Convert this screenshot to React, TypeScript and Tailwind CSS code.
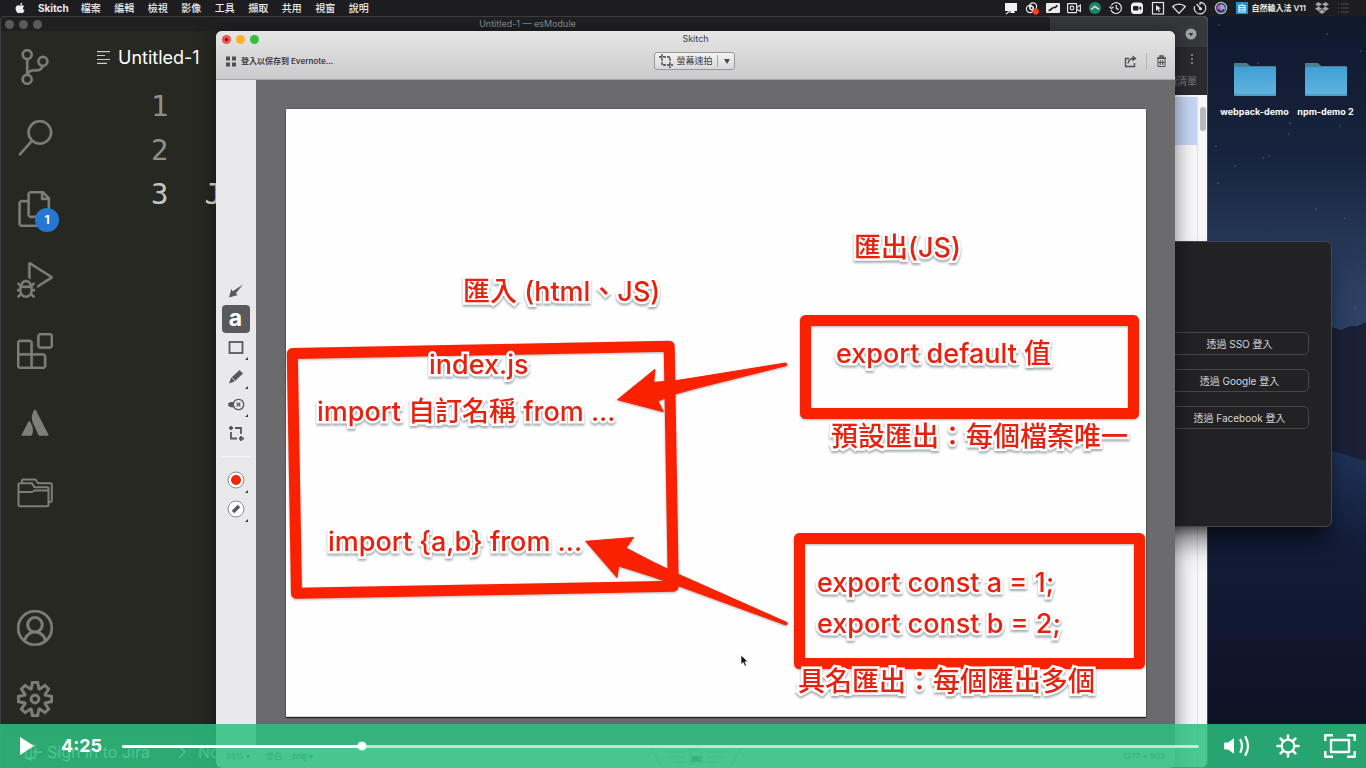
import React from "react";
import type { ReactNode } from "react";
import { FaApple, FaDropbox } from "react-icons/fa";
import {
  VscAccount,
  VscDebugAlt,
  VscExtensions,
  VscFiles,
  VscSearch,
  VscSettingsGear,
  VscSourceControl,
} from "react-icons/vsc";

const menus = ["檔案", "編輯", "檢視", "影像", "工具", "擷取", "共用", "視窗", "說明"];

function StatusIcon({ children }: { children: ReactNode }) {
  return (
    <svg viewBox="0 0 14 14" className="h-3.5 w-3.5 shrink-0" fill="none" stroke="#e4e4e6" strokeWidth="1.2" aria-hidden="true">
      {children}
    </svg>
  );
}

function MenuBar() {
  return (
    <header className="relative z-10 flex h-4 shrink-0 items-center bg-[#1d1d1f] pl-3.5 pr-4 text-[10px] leading-4 text-[#ececee]">
      <nav className="flex items-center gap-3 font-medium">
        <FaApple className="h-3 w-3" />
        <button className="text-[10px] font-bold">Skitch</button>
        <div className="flex w-[288px] justify-between">
          {menus.map((m) => (
            <button key={m}>{m}</button>
          ))}
        </div>
      </nav>
      <div className="ml-auto flex items-center gap-[7px]">
        <StatusIcon>
          <path d="M1 2h12v8h-3l1 2H6l1-2H1z" fill="#f2f2f2" stroke="none" />
          <path d="M2 13l5-4" />
        </StatusIcon>
        <StatusIcon>
          <circle cx="5" cy="8" r="3.6" />
          <circle cx="8" cy="5.5" r="3.6" />
          <circle cx="6.5" cy="7" r="1.6" />
          <circle cx="10.8" cy="10.6" r="3.1" fill="#ff3b1d" stroke="none" />
        </StatusIcon>
        <StatusIcon>
          <rect x="0" y="2" width="14" height="10" rx="1" fill="#ececec" stroke="none" />
          <path d="M2.5 9.5c3 0 3-3 5.5-3s1.5-1 3.5-2" stroke="#222" strokeWidth="1.7" />
        </StatusIcon>
        <StatusIcon>
          <rect x=".6" y="2.6" width="9" height="9" rx=".5" />
          <circle cx="5" cy="7" r="1.8" />
          <path d="M9.6 6.5l3.8-2.5v6.5l-3.8-2.5" />
        </StatusIcon>
        <StatusIcon>
          <circle cx="7" cy="7" r="6" fill="#20856c" stroke="none" />
          <path d="M3 8.5l4-3 4 3" strokeWidth="1.5" />
        </StatusIcon>
        <StatusIcon>
          <path d="M2.3 4.5A5.4 5.4 0 1 1 2 9M.5 5.5l1.8 2L4.500 6M7.300 4v3.400l2.400 1.200" />
        </StatusIcon>
        <StatusIcon>
          <rect x="1" y="1.5" width="12" height="11.5" rx="3.5" fill="#f2f2f2" stroke="none" />
          <rect x="3" y="5" width="5.5" height="4.5" rx="1" fill="#222" stroke="none" />
          <path d="M9 7l2-1.5v3.500z" fill="#222" stroke="#222" strokeWidth=".5" />
        </StatusIcon>
        <StatusIcon>
          <rect x="1.5" y="1.5" width="11" height="11.5" />
          <path d="M5 4l5 3.6-2.200.4 1.200 2.500-1.200.5-1.200-2.400L5 10z" fill="#e4e4e6" stroke="none" />
        </StatusIcon>
        <StatusIcon>
          <path d="M.7 5.500C4 2.200 10 2.200 13.300 5.500L7 12.300z" />
        </StatusIcon>
        <StatusIcon>
          <path d="M7 1.300a5.800 5.800 0 1 1-5.500 4M7 1.300V4M3.500 3l4 4.500" />
          <circle cx="7.5" cy="7.7" r=".9" fill="#e4e4e6" />
        </StatusIcon>
        <StatusIcon>
          <circle cx="7" cy="7" r="5.6" fill="#273b78" stroke="#b9bccb" />
          <path d="M3 9c0-4 2-5.500 4-5.500S11 5 11 9L9 7.500 7 10 5 7.500z" fill="#e65a95" stroke="none" />
          <path d="M7 3.500C9 3.500 11 5 11 9L9 7.500 7 10z" fill="#5cc8e8" stroke="none" />
        </StatusIcon>
        <div className="flex items-center gap-0.5">
          <StatusIcon>
            <rect x="1" y="1" width="12" height="12" fill="#1f93c8" stroke="none" />
            <path d="M4 4.500h6v6.500H4zM4 6.700h6M4 8.800h6M7 2.500v2" stroke="#dff2fb" />
          </StatusIcon>
          <span className="text-[8px] font-semibold">自然輸入法 V11</span>
        </div>
        <FaDropbox className="ml-0.5 h-3.5 w-3.5 text-[#a2a2a5]" />
        <StatusIcon>
          <path d="M2 3h1M5 3h8M2 7h1M5 7h8M2 11h1M5 11h8" stroke="#4d4d50" />
        </StatusIcon>
      </div>
    </header>
  );
}

function Wallpaper() {
  return (
    <svg className="absolute inset-0 h-full w-full" viewBox="0 16 1366 752" preserveAspectRatio="none" aria-hidden="true">
      <defs>
        <linearGradient id="sky" x1="0" y1="0" x2="0" y2="1">
          <stop offset="0" stopColor="#0f182d" />
          <stop offset=".18" stopColor="#17233d" />
          <stop offset=".36" stopColor="#2b3f62" />
          <stop offset=".5" stopColor="#31476b" />
        </linearGradient>
        <linearGradient id="dune" x1="0" y1="0" x2="0" y2="1">
          <stop offset="0" stopColor="#1e3358" />
          <stop offset=".3" stopColor="#131c38" />
          <stop offset="1" stopColor="#0c1020" />
        </linearGradient>
      </defs>
      <rect y="16" width="1366" height="752" fill="url(#sky)" />
      <path d="M1190 327h142l9 3 9-4 8 0 8-4v300h-176z" fill="#1b2036" />
      <path d="M1332 451l34 10v307h-166V461z" fill="url(#dune)" />
      <g fill="#8493b1">
        {[
          [1219, 25], [1327, 34], [1361, 51], [1258, 63], [1290, 123], [1340, 126], [1216, 146], [1235, 166],
          [1263, 158], [1289, 134], [1218, 183], [1345, 218], [1316, 209], [1355, 308], [1269, 156],
        ].map(([x, y]) => (
          <circle key={`${x}-${y}`} cx={x} cy={y} r=".6" />
        ))}
      </g>
    </svg>
  );
}

function Folder({ name }: { name: string }) {
  return (
    <figure className="flex w-[71px] flex-col items-center">
      <svg viewBox="0 0 44 34" className="h-[34px] w-11" aria-hidden="true">
        <defs>
          <linearGradient id="folder" x1="0" y1="0" x2="0" y2="1">
            <stop offset="0" stopColor="#3f9fd4" />
            <stop offset="1" stopColor="#62b5df" />
          </linearGradient>
        </defs>
        <path d="M1 2q0-1 1-1h11q1 0 2 1l2 2h25q1 0 1 1v5H1z" fill="#4a7f99" />
        <rect x="1" y="5" width="42" height="29" rx="1" fill="url(#folder)" />
        <path d="M1 33h42" stroke="#3c87b2" />
      </svg>
      <figcaption className="mt-2.5 whitespace-nowrap text-[9px] font-bold leading-3 text-white">{name}</figcaption>
    </figure>
  );
}

function BrowserWindow() {
  return (
    <section className="absolute bottom-0 left-0 right-[158px] top-0 flex flex-col overflow-hidden rounded-b-md rounded-t border border-[#48494c] bg-[#f7f6f9]">
      <div className="flex h-[30px] shrink-0 items-center justify-end bg-[#37383c] pr-2.5 pt-1">
        <svg viewBox="0 0 12 12" className="h-3 w-3" aria-hidden="true">
          <circle cx="6" cy="6" r="5.5" fill="#a2a3a6" />
          <path d="M3.500 5h5L6 8.200z" fill="#35363a" />
        </svg>
      </div>
      <div className="flex h-12 shrink-0 flex-col items-end justify-between bg-[#2b2b2f] pb-1.5 pr-2.5 pt-1.5 text-[10px] leading-4 text-[#77777b]">
        <svg viewBox="0 0 10 12" className="h-3 w-2.5" fill="#9a9a9d" aria-hidden="true">
          <circle cx="5" cy="2" r="1" />
          <circle cx="5" cy="6" r="1" />
          <circle cx="5" cy="10" r="1" />
        </svg>
        <span>閱讀清單</span>
      </div>
      <div className="flex min-h-0 flex-1 pt-0.5">
        <div className="flex-1">
          <div className="h-12 bg-[#c6d6f4]" />
        </div>
        <div className="flex w-2.5 flex-col items-center border-l border-[#e2e1e5] pt-2.5">
          <div className="h-6 w-1.5 rounded-full bg-[#b9b9bb]" />
        </div>
      </div>
    </section>
  );
}

const iconClass = "h-9 w-9 [stroke-width:0.25]";

const sideIcons = [
  { label: "Source Control", icon: <VscSourceControl className={iconClass} /> },
  { label: "Search", icon: <VscSearch className={iconClass} /> },
  { label: "Explorer", icon: <VscFiles className={iconClass} />, badge: "1" },
  { label: "Run", icon: <VscDebugAlt className={iconClass} /> },
  { label: "Extensions", icon: <VscExtensions className={iconClass} /> },
  {
    label: "Atlassian",
    icon: (
      <svg viewBox="0 0 36 36" className="h-9 w-9" fill="currentColor" aria-hidden="true">
        <path d="M11.500 17.500q.8-1.200 1.600.2c3 5 3.700 9 1.900 13.200q-.4.800-1.300.8H5.500q-1.400 0-.8-1.300z" />
        <path d="M17.300 6q.8-1.200 1.600.2L31.400 30.400q.6 1.300-.8 1.300h-7.800q-1 0-1.400-.8l-5.400-12c-2-4.700-1.400-8.700 1.300-12.900z" />
      </svg>
    ),
  },
  {
    label: "Projects",
    icon: (
      <svg viewBox="0 0 36 36" className="h-9 w-9" fill="none" stroke="currentColor" strokeWidth="2" strokeLinejoin="round" aria-hidden="true">
        <path d="M1.500 9.500q0-1.200 1.200-1.200H15l2.500 4h13q1 0 1 1V30q0 1.200-1.200 1.200H2.700q-1.200 0-1.200-1.200zM1.500 17h13.500l2.500-1.500h14" />
        <path d="M5 8V5.500q0-1 1-1h12.500l2.500 3.700h12.500q1.300 0 1.300 1.200v16.200q0 1.400-1.300 1.400H32" />
      </svg>
    ),
  },
];

function EditorWindow() {
  return (
    <section className="absolute bottom-0 left-0 right-[315px] top-0 flex flex-col overflow-hidden rounded border border-[#3c3c3e] bg-[#282822]">
      <div className="grid h-3.5 shrink-0 grid-cols-[1fr_auto_1fr] items-center bg-[#202022] pl-1 text-[9px] text-[#8c8c8f]">
        <div className="flex gap-[5px]">
          <i className="h-[9px] w-[9px] rounded-full bg-[#5a5a5d]" />
          <i className="h-[9px] w-[9px] rounded-full bg-[#5a5a5d]" />
          <i className="h-[9px] w-[9px] rounded-full bg-[#5a5a5d]" />
        </div>
        <span>Untitled-1 — esModule</span>
      </div>
      <div className="flex min-h-0 flex-1">
        <nav className="flex w-[68px] shrink-0 flex-col text-[#7e7e79]">
          {sideIcons.map((s) => (
            <button key={s.label} aria-label={s.label} className="relative flex h-[71px] shrink-0 items-center justify-center">
              {s.icon}
              {s.badge && (
                <span className="absolute bottom-3 right-2.5 flex h-6 w-6 items-center justify-center rounded-full bg-[#2776d2] text-xs font-bold text-white">
                  {s.badge}
                </span>
              )}
            </button>
          ))}
          <button aria-label="Account" className="mt-auto flex h-[71px] shrink-0 items-center justify-center">
            <VscAccount className={iconClass} />
          </button>
          <button aria-label="Manage" className="flex h-[71px] shrink-0 items-center justify-center">
            <VscSettingsGear className={iconClass} />
          </button>
        </nav>
        <div className="flex min-w-0 flex-1 flex-col">
          <div className="flex h-[53px] shrink-0 items-center gap-2 pl-7 text-lg text-white">
            <svg viewBox="0 0 13 13" className="h-[13px] w-[13px]" stroke="#c8c8c6" strokeWidth="1.2" aria-hidden="true">
              <path d="M0 .6h13M0 4.500h8M0 8.500h13M0 12.400h10" />
            </svg>
            <span>Untitled-1</span>
          </div>
          <ol className="font-['DejaVu_Sans_Mono',monospace] text-[29px] leading-[44px] text-[#8e8f89]">
            <li className="flex gap-9 pl-[82px]">1</li>
            <li className="flex gap-9 pl-[82px]">2</li>
            <li className="flex gap-9 pl-[82px] text-[#c5c6c0]">
              <span>3</span>
              <span className="text-[#e3e3dd]">J</span>
            </li>
          </ol>
        </div>
      </div>
      <footer className="flex h-[33px] shrink-0 items-center bg-[#2e2e2b] pl-6 pt-0.5 text-base text-[#f0f0ee]">
        <svg viewBox="0 0 18 18" className="mr-1 h-[18px] w-[18px]" fill="none" stroke="currentColor" strokeWidth="1.3" aria-hidden="true">
          <path d="M1 2h9v4M10 12v3H1V2l5 3v12l-5-2M17 9H9M12 6L9 9l3 3" />
        </svg>
        <span>Sign in to Jira</span>
        <svg viewBox="0 0 8 14" className="ml-7 mr-3 h-3.5 w-2" fill="none" stroke="currentColor" strokeWidth="1.3" aria-hidden="true">
          <path d="M1 1l6 6-6 6" />
        </svg>
        <span>No</span>
      </footer>
    </section>
  );
}

function LoginWindow() {
  return (
    <section className="absolute right-[34px] top-[225px] flex h-[286px] w-[185px] flex-col items-center gap-3.5 rounded-md border border-[#47484c] bg-[#222224] pt-[90px] text-[10px] text-[#d6d6d8] shadow-xl shadow-black/50">
      {["SSO", "Google", "Facebook"].map((p) => (
        <button key={p} className="h-[23px] w-[138px] shrink-0 rounded-[5px] border border-[#47474a] pt-px">
          透過 {p} 登入
        </button>
      ))}
    </section>
  );
}

function ToolMark() {
  return <path d="M26 24v3h-3z" fill="#3d3d3f" stroke="none" />;
}

function Tool({ label, active, children }: { label: string; active?: boolean; children: ReactNode }) {
  return (
    <button
      aria-label={label}
      className={
        active
          ? "flex min-h-0 w-7 flex-1 items-center justify-center rounded bg-[#59595c]"
          : "flex min-h-0 w-7 flex-1 items-center justify-center"
      }
    >
      {children}
    </button>
  );
}

function ToolSvg({ children }: { children: ReactNode }) {
  return (
    <svg viewBox="0 0 28 28" className="h-7 w-7" fill="none" stroke="#59595c" strokeWidth="1.5" aria-hidden="true">
      {children}
    </svg>
  );
}

function ToolPalette() {
  return (
    <aside className="flex w-10 shrink-0 flex-col items-center bg-[#e9e8eb] pr-px pt-[196px]">
      <div className="flex h-[171px] flex-col">
        <Tool label="Arrow">
          <ToolSvg>
            <path d="M7 21.500l2.300-8.500 1.500 2.300L21 8.500l-7.300 9 2.300 1.500z" fill="#59595c" stroke="none" />
          </ToolSvg>
        </Tool>
        <Tool label="Text" active>
          <span className="text-[23px] font-bold leading-none text-white">a</span>
        </Tool>
        <Tool label="Rectangle">
          <ToolSvg>
            <rect x="7.500" y="9" width="13" height="11" strokeWidth="1.8" />
            <ToolMark />
          </ToolSvg>
        </Tool>
        <Tool label="Marker">
          <ToolSvg>
            <path d="M7 21.500l2-5.500 8.500-8 3.500 3.500-8.500 8z" fill="#59595c" stroke="none" />
            <path d="M9.500 15.500l4 4" stroke="#e9e8eb" strokeWidth=".8" />
            <ToolMark />
          </ToolSvg>
        </Tool>
        <Tool label="Pixelate">
          <ToolSvg>
            <path d="M6 14.500c0-2 2-2.500 5.500-2.500v5.500c-3.500 0-5.500-1-5.500-3z" fill="#59595c" stroke="none" />
            <circle cx="16.5" cy="14.5" r="5.2" strokeWidth="1.3" fill="#e9e8eb" />
            <path d="M14.700 12.700l3.600 3.600M18.300 12.700l-3.600 3.600" strokeWidth="1.3" />
            <ToolMark />
          </ToolSvg>
        </Tool>
        <Tool label="Crop">
          <ToolSvg>
            <path d="M9 13v6.500h6M13 9h6v6M9 7v4M7 9h4M19 17v5M17 19.500h5" strokeWidth="1.8" />
            <circle cx="9" cy="9" r="1" fill="#59595c" />
            <circle cx="19" cy="19.5" r="1" fill="#59595c" />
          </ToolSvg>
        </Tool>
      </div>
      <hr className="my-[9px] w-7 border-[#f8f8fa]" />
      <div className="flex h-[57px] flex-col">
        <Tool label="Color">
          <ToolSvg>
            <circle cx="14" cy="14" r="8" fill="#fff" stroke="#8b8c90" strokeWidth="1" />
            <circle cx="14" cy="14" r="5" fill="#fb2200" stroke="none" />
            <ToolMark />
          </ToolSvg>
        </Tool>
        <Tool label="Size">
          <ToolSvg>
            <circle cx="14" cy="14" r="8" fill="#fff" stroke="#8b8c90" strokeWidth="1" />
            <path d="M11 17l6-6" strokeWidth="3.5" />
            <ToolMark />
          </ToolSvg>
        </Tool>
      </div>
    </aside>
  );
}

function Note({ place, children }: { place: string; children: ReactNode }) {
  return (
    <p
      className={`absolute whitespace-nowrap text-[27px] font-medium leading-8 text-[#e8210e] [-webkit-text-stroke:5px_#fff] [paint-order:stroke_fill] [filter:drop-shadow(0_2px_1px_rgba(70,90,100,0.5))] ${place}`}
    >
      {children}
    </p>
  );
}

function Paper() {
  return (
    <div className="relative flex-1 overflow-hidden border-b border-[#d5d5d7] bg-[#fefefe] shadow-[0_1px_1px_#222,0_0_2px_#444]">
      <svg
        viewBox="286 109 860 608"
        className="absolute left-0 top-0 h-[608px] w-[860px] [filter:drop-shadow(0_1px_1px_rgba(60,60,70,0.4))]"
        fill="none"
        stroke="#f92100"
        strokeWidth="11"
        strokeLinejoin="round"
        aria-hidden="true"
      >
        <path d="M292.300 353.500L669.200 346.200 673.300 586.300 296.500 593.300z" />
        <rect x="805.5" y="320.5" width="328" height="93" />
        <rect x="799.5" y="538.5" width="340" height="125" />
        <g fill="#f92100" stroke="#f92100" strokeWidth="1">
          <path d="M617.500 399.700L655 369.300 653.700 382.300Q672 382 690 378.500L785.500 363Q788 364 786.500 365.500L695 388.500Q675 393 658 401L663.300 411.700z" />
          <path d="M585.700 541.300L633.500 537.500 626 548Q652 562 680 575L787 622.500Q788 624.500 786 625L679 586Q652 576 618.700 566L617 577.500z" />
        </g>
      </svg>
      <Note place="left-[177px] top-[167px]">匯入 (html、JS)</Note>
      <Note place="left-[568px] top-[123px]">匯出(JS)</Note>
      <Note place="left-[143px] top-[240px]">index.js</Note>
      <Note place="left-[31px] top-[287px]">import 自訂名稱 from ...</Note>
      <Note place="left-[42px] top-[417px]">{"import {a,b} from ..."}</Note>
      <Note place="left-[550px] top-[229px]">export default 值</Note>
      <Note place="left-[545px] top-[312px]">預設匯出：每個檔案唯一</Note>
      <Note place="left-[531px] top-[458px]">export const a = 1;</Note>
      <Note place="left-[531px] top-[499px]">export const b = 2;</Note>
      <Note place="left-[512px] top-[557px]">具名匯出：每個匯出多個</Note>
      <svg viewBox="0 0 10 14" className="absolute left-[454px] top-[545px] h-3.5 w-2.5" aria-hidden="true">
        <path d="M1 1v9.500l2.200-2 1.600 3.700 1.700-.7-1.600-3.700h3z" fill="#111" stroke="#fff" strokeWidth=".7" />
      </svg>
    </div>
  );
}

function SkitchWindow() {
  return (
    <section className="absolute bottom-0 left-[216px] right-[191px] top-[15px] flex flex-col overflow-hidden rounded-md bg-[#e6e6e8] shadow-[0_4px_20px_rgba(0,0,0,0.5)]">
      <div className="flex h-[49px] shrink-0 flex-col border-b border-[#a8a8aa] bg-linear-to-b from-[#e6e6e7] to-[#cbcbcd] text-[#3d3d40]">
        <div className="grid h-4 grid-cols-[1fr_auto_1fr] items-center px-1.5 text-[9px]">
          <div className="flex gap-[5px]">
            <button aria-label="Close" className="flex h-[9px] w-[9px] items-center justify-center rounded-full bg-[#ee5350]">
              <i className="h-[3px] w-[3px] rounded-full bg-[#6b0d0b]" />
            </button>
            <button aria-label="Minimize" className="h-[9px] w-[9px] rounded-full bg-[#fab22b]" />
            <button aria-label="Zoom" className="h-[9px] w-[9px] rounded-full bg-[#31c13c]" />
          </div>
          <span>Skitch</span>
        </div>
        <div className="grid h-7 grid-cols-[1fr_auto_1fr] items-center pl-[9px] pr-2 text-[8px] font-semibold">
          <button className="flex items-center gap-1">
            <svg viewBox="0 0 12 11" className="h-[11px] w-3" fill="#4f4f52" aria-hidden="true">
              <path d="M1 .5h4v4H1zM7 .5h4v4H7zM1 6.500h4v4H1zM7 6.500h4v4H7z" />
            </svg>
            登入以保存到 Evernote...
          </button>
          <button className="mr-1 flex h-[18px] w-[81px] items-center rounded-[3px] border border-[#98989a] bg-linear-to-b from-[#f3f3f4] to-[#d9d9db] pl-1 font-normal">
            <svg viewBox="0 0 14 14" className="mr-1 h-3.5 w-3.5" fill="none" stroke="#3e3e41" strokeWidth="1.3" aria-hidden="true">
              <path d="M3 0v11h11M0 3h11v11" strokeDasharray="3 1" />
            </svg>
            <span className="text-[9px]">螢幕速拍</span>
            <span className="ml-1 h-3 w-px bg-[#a9a9ab]" />
            <svg viewBox="0 0 6 5" className="ml-1.5 h-[5px] w-1.5" fill="#4a4a4d" aria-hidden="true">
              <path d="M0 0h6L3 5z" />
            </svg>
          </button>
          <div className="flex items-center justify-end gap-[9px]">
            <button aria-label="Share">
              <svg viewBox="0 0 13 13" className="h-[13px] w-[13px]" fill="none" stroke="#4f4f52" strokeWidth="1.4" aria-hidden="true">
                <path d="M5 3.500H1.500v8h9V8M4 8.500c.5-3 2.500-5 5.500-5" />
                <path d="M8.500 .5l4 3-4 3z" fill="#4f4f52" stroke="none" />
              </svg>
            </button>
            <span className="h-4 w-px bg-[#b5b5b7]" />
            <button aria-label="Delete">
              <svg viewBox="0 0 11 13" className="h-[13px] w-[11px]" fill="none" stroke="#4f4f52" aria-hidden="true">
                <path d="M1 3h9M4 3V1h3v2" strokeWidth="1.4" />
                <path d="M2 3.500h7v8H2zM4.300 5v5M6.700 5v5M2 7.500h7" />
              </svg>
            </button>
          </div>
        </div>
      </div>
      <div className="flex min-h-0 flex-1">
        <ToolPalette />
        <main className="flex min-w-0 flex-1 bg-[#6b6b6d] pb-[30px] pl-[30px] pr-[29px] pt-[29px]">
          <Paper />
        </main>
      </div>
      <footer className="grid h-[21px] shrink-0 grid-cols-[1fr_auto_1fr] items-center px-2.5 pb-[3px] text-[8px] text-[#5a5a5c]">
        <div className="flex gap-4">
          <span>95% ▾</span>
          <span className="flex gap-2">
            <span>空白</span>
            <span>.png ▾</span>
          </span>
        </div>
        <svg viewBox="0 0 94 18" className="h-[18px] w-[94px]" fill="none" stroke="#a6a6a8" aria-hidden="true">
          <path d="M0 0q4 2 6 8t6 10M94 0q-4 2-6 8t-6 10M18 5h18M22 10h14M26 15h10M58 5h18M58 10h14M58 15h10M41 8V3h9l3 3v12H41v-2" />
          <rect x="42" y="9" width="10" height="6" fill="#6a6a6c" />
        </svg>
        <span className="text-right">1277 x 903</span>
      </footer>
    </section>
  );
}

function PlayerBar() {
  return (
    <div className="absolute inset-x-0 bottom-0 z-20 flex h-11 items-center bg-[rgba(43,191,127,0.85)] pl-5 pr-2.5 text-white">
      <button aria-label="Play">
        <svg viewBox="0 0 14 18" className="h-[18px] w-3.5" fill="currentColor" aria-hidden="true">
          <path d="M0 0l14 9-14 9z" />
        </svg>
      </button>
      <time className="ml-[27px] w-[61px] text-lg font-bold">4:25</time>
      <input
        type="range"
        aria-label="Seek"
        min={0}
        max={1200}
        defaultValue={265}
        className="h-[3px] min-w-0 flex-1 appearance-none rounded-full bg-[linear-gradient(to_right,#fff_22%,rgba(255,255,255,0.65)_22%)] [&::-webkit-slider-thumb]:h-2 [&::-webkit-slider-thumb]:w-2 [&::-webkit-slider-thumb]:appearance-none [&::-webkit-slider-thumb]:rounded-full [&::-webkit-slider-thumb]:bg-white [&::-webkit-slider-thumb]:shadow-[0_0_2px_#fff]"
      />
      <button aria-label="Volume" className="ml-6">
        <svg viewBox="0 0 28 22" className="h-[22px] w-7" fill="none" stroke="currentColor" strokeWidth="2.2" strokeLinecap="round" aria-hidden="true">
          <path d="M1 8.500q0-1 1-1h3l6-4.300v15.600L5 14.500H2q-1 0-1-1z" fill="currentColor" stroke="none" />
          <path d="M17.500 5q3 6 0 12M22.500 2q5 9 0 18" />
        </svg>
      </button>
      <button aria-label="Settings" className="ml-[25px]">
        <svg viewBox="0 0 24 24" className="h-6 w-6" fill="none" stroke="currentColor" strokeWidth="2.2" strokeLinecap="round" aria-hidden="true">
          <circle cx="12" cy="12" r="6.3" />
          <path d="M12 5V1.500M12 22.500V19M5 12H1.500M22.500 12H19M7 7L4.600 4.600M19.400 19.400L17 17M7 17l-2.400 2.400M19.400 4.600L17 7" strokeWidth="2.6" />
        </svg>
      </button>
      <button aria-label="Full screen" className="ml-6">
        <svg viewBox="0 0 32 24" className="h-6 w-8" fill="none" stroke="currentColor" strokeWidth="2.4" strokeLinejoin="round" aria-hidden="true">
          <path d="M1.300 7V1.300H9M23 1.300h7.700V7M30.700 17v5.700H23M9 22.700H1.300V17" />
          <rect x="7" y="6" width="18" height="12" />
        </svg>
      </button>
    </div>
  );
}

export default function App() {
  return (
    <div className="relative flex h-screen w-full flex-col overflow-hidden bg-[#0d1222] font-['Inter','Noto_Sans_CJK_TC',sans-serif]">
      <MenuBar />
      <div className="relative min-h-0 flex-1">
        <Wallpaper />
        <div className="absolute right-[5px] top-[46px] flex">
          <Folder name="webpack-demo" />
          <Folder name="npm-demo 2" />
        </div>
        <BrowserWindow />
        <EditorWindow />
        <LoginWindow />
        <SkitchWindow />
      </div>
      <PlayerBar />
    </div>
  );
}
